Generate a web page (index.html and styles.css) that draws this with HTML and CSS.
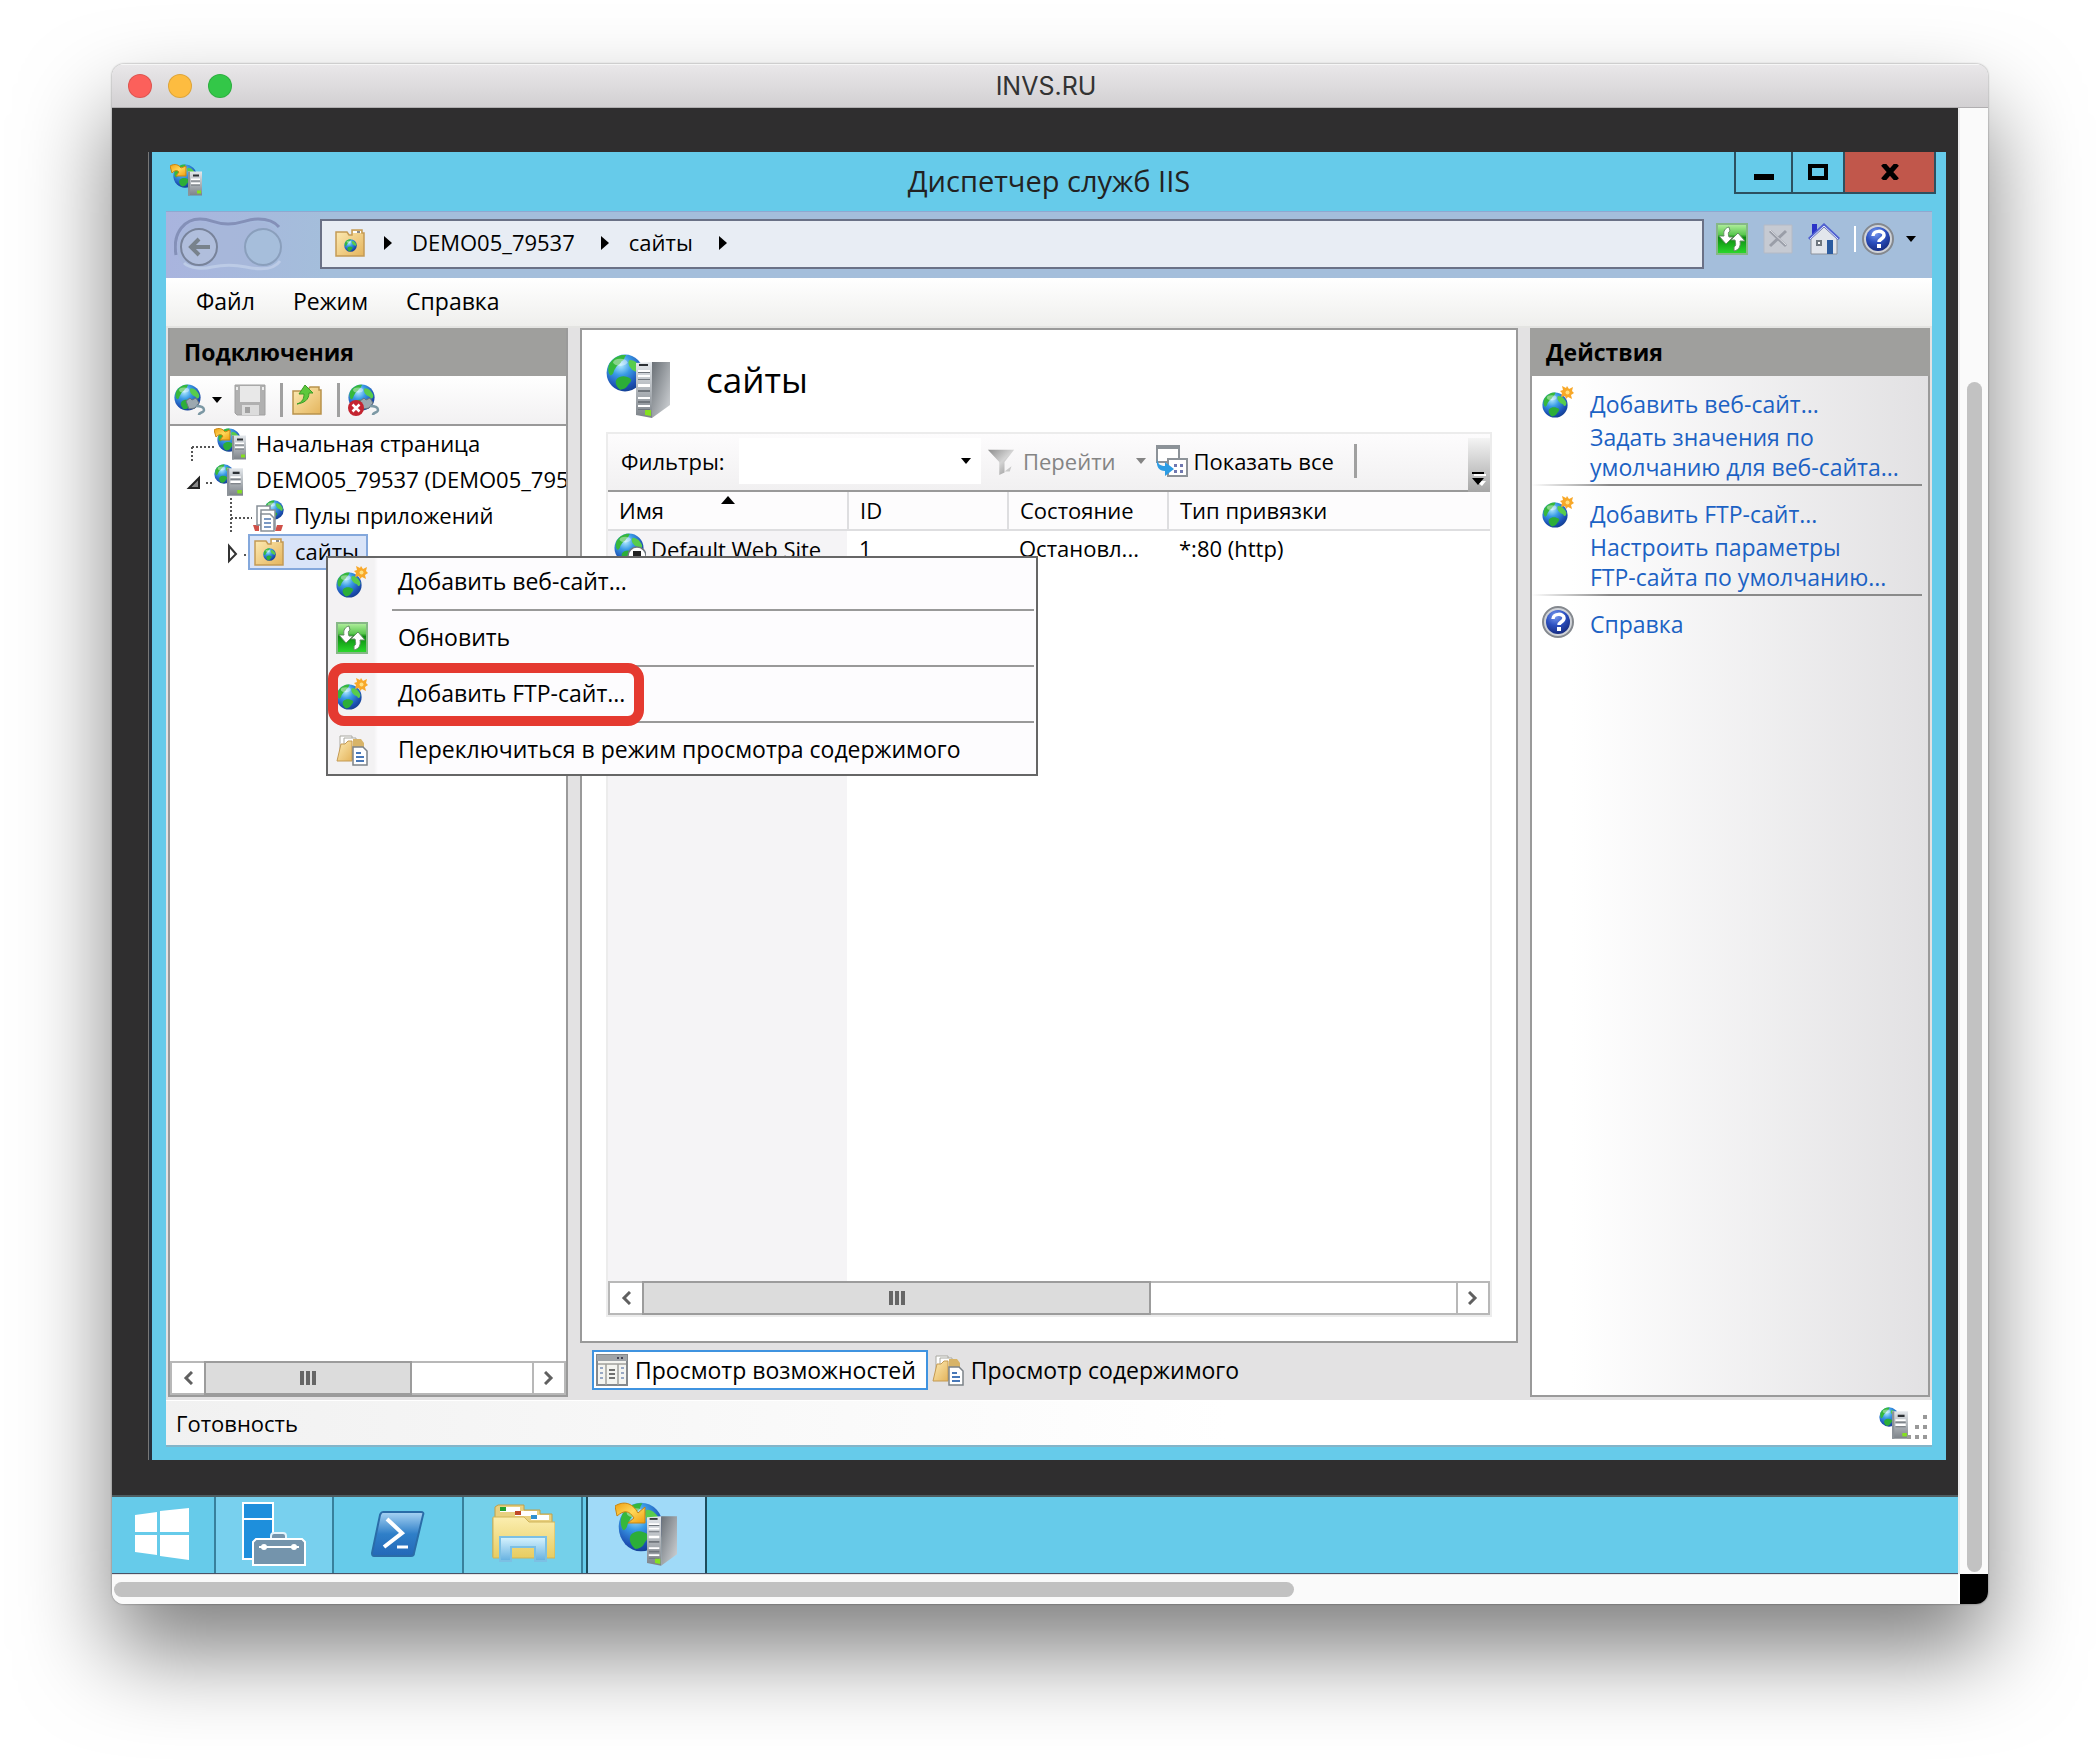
FILE: index.html
```html
<!DOCTYPE html>
<html lang="ru">
<head>
<meta charset="utf-8">
<title>INVS.RU</title>
<link rel="stylesheet" href="styles.css">
</head>
<body>
<svg class="sprite" aria-hidden="true">
  <defs>
    <radialGradient id="g-sea" cx=".38" cy=".28" r=".8"><stop offset="0" stop-color="#b4ecff"/><stop offset=".35" stop-color="#3a9be6"/><stop offset=".75" stop-color="#1c50b4"/><stop offset="1" stop-color="#123a86"/></radialGradient>
    <linearGradient id="g-server" x1="0" y1="0" x2="0" y2="1"><stop offset="0" stop-color="#e4e8ec"/><stop offset="1" stop-color="#7c8288"/></linearGradient>
    <linearGradient id="g-side" x1="0" y1="0" x2="1" y2="1"><stop offset="0" stop-color="#6a7076"/><stop offset="1" stop-color="#d4d7da"/></linearGradient>
    <linearGradient id="g-folder" x1="0" y1="0" x2="1" y2="1"><stop offset="0" stop-color="#fdebb4"/><stop offset="1" stop-color="#e4b45c"/></linearGradient>
    <linearGradient id="g-green" x1="0" y1="0" x2="0" y2="1"><stop offset="0" stop-color="#b4f0a0"/><stop offset=".35" stop-color="#5cc850"/><stop offset=".45" stop-color="#0c8a10"/><stop offset="1" stop-color="#2cdc2c"/></linearGradient>
    <radialGradient id="g-help" cx=".4" cy=".25" r=".8"><stop offset="0" stop-color="#7c9cf0"/><stop offset=".5" stop-color="#2c50c0"/><stop offset="1" stop-color="#14287c"/></radialGradient>
    <linearGradient id="g-arrow" x1="0" y1="0" x2="1" y2="1"><stop offset="0" stop-color="#f0a010"/><stop offset=".5" stop-color="#ffd858"/><stop offset="1" stop-color="#f09c10"/></linearGradient>
    <linearGradient id="g-ps" x1="0" y1="0" x2="0" y2="1"><stop offset="0" stop-color="#a8d4f4"/><stop offset=".5" stop-color="#2f7fc8"/><stop offset="1" stop-color="#2468b8"/></linearGradient>
    <linearGradient id="g-glass" x1="0" y1="0" x2="0" y2="1"><stop offset="0" stop-color="#d8f4ff"/><stop offset="1" stop-color="#64b0e0"/></linearGradient>
    <linearGradient id="g-yellow" x1="0" y1="0" x2="0" y2="1"><stop offset="0" stop-color="#fbeeb0"/><stop offset="1" stop-color="#e8cc60"/></linearGradient>
    <linearGradient id="g-grey" x1="0" y1="0" x2="1" y2="1"><stop offset="0" stop-color="#8c8c8c"/><stop offset=".5" stop-color="#d4d4d4"/><stop offset="1" stop-color="#8c8c8c"/></linearGradient>
  </defs>
  <symbol id="globe" viewBox="0 0 32 32">
    <circle cx="16" cy="16" r="15.500" fill="url(#g-sea)"/>
    <path d="M3 8C7 2 13 0 17 1c-2 2-1 4-4 5-1 3-4 3-5 6-2 2-1 5-4 6-2-1-3-6-1-10z" fill="#36b83c"/>
    <path d="M20 5c5 0 8 4 10 8 0 3-1 5-3 4-1-3-4-2-6-5-2-2-3-6-1-7z" fill="#58cc4c"/>
    <path d="M9 21c3-3 8-3 12 0 1 2-2 4-3 6-1 2-4 3-6 3-3-2-5-6-3-9z" fill="#2cae38"/>
    <ellipse cx="12" cy="7" rx="6" ry="3" fill="#fff" opacity=".4"/>
  </symbol>
  <symbol id="tower" viewBox="0 0 14 24">
    <path d="M0 0h14v24H0z" fill="url(#g-server)"/>
    <path d="M0 0h2v24H0z" fill="#8c9298"/>
    <path d="M5 3h6v2H5z" fill="#2c3034"/>
    <path d="M3 7h9v2H3zM3 11h9v2H3z" fill="#fff"/>
    <path d="M3 9h9v1H3zM3 13h9v1H3z" fill="#6c7278"/>
    <path d="M9 19h4v3H9z" fill="#84e020"/>
  </symbol>
  <symbol id="server" viewBox="0 0 32 32">
    <use href="#globe" x="0" y="0" width="20" height="20"/>
    <use href="#tower" x="13" y="4" width="16" height="28" />
  </symbol>
  <symbol id="iis" viewBox="0 0 32 32">
    <use href="#globe" x="3" y="0" width="24" height="24"/>
    <path d="M0 2c5-3 9-1 11 2l5-2v10H6l3-4C7 6 5 6 2 9z" fill="url(#g-arrow)" stroke="#c88410"/>
    <use href="#tower" x="18" y="7" width="14" height="25"/>
  </symbol>
  <symbol id="globe-new" viewBox="0 0 32 32">
    <use href="#globe" x="0" y="6" width="26" height="26"/>
    <path d="M25 0l2 3 4-2-1 4 2 2-3 2 1 4-4-2-2 2-1-3-4 1 1-4-2-2 3-1-1-4 4 2z" fill="#f8a828"/>
    <circle cx="25.500" cy="6.500" r="2" fill="#ffe080"/>
  </symbol>
  <symbol id="site-folder" viewBox="0 0 32 32">
    <path d="M2 5h11l2 3h3V3h10v3h2v23H2z" fill="url(#g-folder)" stroke="#c49a54" stroke-width="1.500"/>
    <path d="M19 4h8v2h-8z" fill="#fff"/><path d="M23 4h3v2h-3z" fill="#888"/>
    <use href="#globe" x="10" y="12" width="13" height="13"/>
  </symbol>
  <symbol id="refresh" viewBox="0 0 32 32">
    <path d="M1 1h30v30H1z" fill="url(#g-green)" stroke="#86b886" stroke-width="2"/>
    <path d="M13 4c-4 1-6 4-5 9H3l7 8 7-7h-4c-1-3-1-5 1-6z" fill="#fff" stroke="#648c64"/>
    <path d="M18 28c5-1 7-5 6-10h5l-7-8-7 7h4c1 4 1 6-1 7z" fill="#fff" stroke="#648c64"/>
  </symbol>
  <symbol id="stop" viewBox="0 0 32 32">
    <path d="M2 2h28v28H2z" fill="#c6cad2" stroke="#b4bac6"/>
    <path d="M8 8l16 15M24 8L8 23" stroke="#9a9ea8" stroke-width="3"/>
    <path d="M8 7l16 15" stroke="#dcdee4" stroke-width="1"/>
  </symbol>
  <symbol id="home" viewBox="0 0 32 32">
    <path d="M4 1h5v8l-5 5z" fill="#2a34c8"/>
    <path d="M3 16L16 4l13 12v15H3z" fill="#e2e6ec" stroke="#8c929c"/>
    <path d="M1 16L16 2l15 14" fill="none" stroke="#5060d0" stroke-width="3"/>
    <path d="M2 16L16 3l14 13" fill="none" stroke="#e4e8ff" stroke-width="1"/>
    <path d="M8 17h6v6H8z" fill="#707880"/><path d="M10 19h2v2h-2z" fill="#fff"/>
    <path d="M19 17h6v14h-6z" fill="#2c5ca0"/>
  </symbol>
  <symbol id="help" viewBox="0 0 32 32">
    <circle cx="16" cy="16" r="15" fill="#d0d3d8" stroke="#84888e" stroke-width="2"/>
    <circle cx="16" cy="16" r="12" fill="url(#g-help)"/>
    <path d="M11 13c0-6 11-6 11-1 0 4-5 4-5 7" fill="none" stroke="#fff" stroke-width="3.500"/>
    <path d="M15 21h4v4h-4z" fill="#fff"/>
  </symbol>
  <symbol id="connect" viewBox="0 0 32 32">
    <use href="#globe" x="0" y="0" width="27" height="27"/>
    <path d="M12 17l4-3 2 2 4-2 3 5-4 5-6 1z" fill="#9ca8b0" stroke="#68747c"/>
    <path d="M22 22c4 0 8 1 8 4s-5 2-5 5" fill="none" stroke="#7c98a4" stroke-width="2.500"/>
  </symbol>
  <symbol id="disconnect" viewBox="0 0 32 32">
    <use href="#connect" width="32" height="32"/>
    <circle cx="8" cy="24" r="8" fill="#c42430"/>
    <path d="M4.500 20.500l7 7M11.500 20.500l-7 7" stroke="#fff" stroke-width="2.500"/>
  </symbol>
  <symbol id="disk" viewBox="0 0 32 32">
    <path d="M1 1h30v30H3l-2-2z" fill="#b0b0b0" stroke="#a0a0a0"/>
    <path d="M6 2h20v16H6z" fill="#e8e8e8"/>
    <path d="M8 21h17v10H8z" fill="#dcdcdc"/><path d="M11 23h5v6h-5z" fill="#a0a0a0"/>
    <path d="M2 3h2v3H2zM28 3h2v3h-2z" fill="#eee"/>
  </symbol>
  <symbol id="folder-up" viewBox="0 0 32 32">
    <path d="M2 7h14l3-4h9v3h2v24H2z" fill="url(#g-folder)" stroke="#b8924c" stroke-width="1.500"/>
    <path d="M6 20c6-2 7-6 7-10H8l6-9 8 8h-4c0 7-5 10-12 11z" fill="#5cc83c" stroke="#3c9c28"/>
  </symbol>
  <symbol id="pool" viewBox="0 0 32 32">
    <use href="#globe" x="12" y="0" width="20" height="20"/>
    <path d="M1 25h6v6H3zM25 25h6l-2 6h-6z" fill="#d05048"/>
    <path d="M5 6h13v19H5z" fill="#fff" stroke="#889098" stroke-width="1.500"/>
    <path d="M9 10h14v19H9z" fill="#fff" stroke="#889098" stroke-width="1.500"/>
    <path d="M9 14h9l4 4v13H9z" fill="#fff" stroke="#889098" stroke-width="1.500"/>
    <path d="M12 19h7M12 23h7M12 27h7" stroke="#5078b0" stroke-width="1.500"/>
  </symbol>
  <symbol id="site" viewBox="0 0 32 32">
    <use href="#globe" width="30" height="30"/>
    <circle cx="23" cy="23" r="9" fill="#fff" stroke="#707880" stroke-width="1.500"/>
    <path d="M19 18h8v10h-8z" fill="#222"/>
  </symbol>
  <symbol id="funnel" viewBox="0 0 32 32">
    <path d="M1 3h30L20 17v12l-6 3V17z" fill="url(#g-grey)"/>
    <path d="M20 28l8-6-2 6z" fill="#c8c8c8"/>
  </symbol>
  <symbol id="show-all" viewBox="0 0 32 32">
    <path d="M1 1h22v16H1z" fill="#fff" stroke="#8c9298" stroke-width="2"/><path d="M0 0h24v4H0z" fill="#8c9298"/>
    <path d="M12 14h19v17H12z" fill="#fff" stroke="#8c9298" stroke-width="2"/>
    <path d="M18 19h3v3h-3zM24 19h3v3h-3zM18 25h3v3h-3zM24 25h3v3h-3z" fill="#7078b0"/>
    <path d="M1 14c1 5 3 7 8 7v-4l9 7-9 7v-5c-6 0-9-4-8-12z" fill="#2c9ce4"/>
  </symbol>
  <symbol id="features" viewBox="0 0 32 32">
    <path d="M1 1h30v30H1z" fill="#f4f4f0" stroke="#84888c" stroke-width="2"/>
    <path d="M1 1h30v6H1z" fill="#a0a4a8"/><path d="M21 3h2v2h-2zM25 3h2v2h-2z" fill="#445"/>
    <path d="M10 10v21M22 10v21M2 10h28" stroke="#a0a09c" stroke-width="1.500"/>
    <path d="M4 14h3M4 19h3M4 24h3M25 14h3M25 19h3M25 24h3" stroke="#98a8c4" stroke-width="2"/>
    <path d="M13 16h6M13 20h6M13 24h6" stroke="#444" stroke-width="1.500"/>
  </symbol>
  <symbol id="content" viewBox="0 0 32 32">
    <path d="M4 2h12v20H4z" fill="#fff" stroke="#a8a8a0"/><path d="M8 4h12v20H8z" fill="#fff" stroke="#a8a8a0"/>
    <path d="M17 5h8l3 4v17H16z" fill="#d8b468"/>
    <path d="M1 27L5 10h4l3-3h4v20z" fill="url(#g-folder)" stroke="#c49a54"/>
    <path d="M17 13h10l4 4v14H17z" fill="#fff" stroke="#7c8288" stroke-width="1.500"/>
    <path d="M20 19h5M20 23h8M20 27h8" stroke="#4878b8" stroke-width="2"/>
  </symbol>
  <symbol id="big-tower" viewBox="0 0 34 56">
    <path d="M0 1l16-1v56L0 53z" fill="url(#g-server)"/>
    <path d="M16 0h18v43L16 56z" fill="url(#g-side)"/>
    <path d="M3 2h9v2H3z" fill="#2c3034"/>
    <path d="M2 8h12v2H2zM2 13h12v2H2zM2 22h12v3H2zM2 35h12v2H2zM2 43h12v2H2z" fill="#fff"/>
    <path d="M2 10h12v1H2zM2 17h12v1H2zM2 28h12v2H2zM2 39h12v2H2zM2 47h12v1H2z" fill="#70767c"/>
    <path d="M9 48h6v6l-6-1z" fill="#84e020"/>
  </symbol>
  <symbol id="sites-large" viewBox="0 0 64 64">
    <use href="#globe" width="38" height="38"/>
    <use href="#big-tower" x="30" y="8" width="34" height="56"/>
  </symbol>
  <symbol id="globe-tall" viewBox="0 0 32 32" preserveAspectRatio="none"><use href="#globe" width="32" height="32"/></symbol>
  <symbol id="iis-large" viewBox="0 0 64 64">
    <use href="#globe-tall" x="3" y="0" width="46" height="50"/>
    <path d="M0 4C8-1 17 0 23 11l7-6v16H13l6-5C14 8 9 8 2 14z" fill="url(#g-arrow)" stroke="#c88410"/>
    <use href="#big-tower" x="32" y="14" width="30" height="50"/>
  </symbol>
  <symbol id="caret" viewBox="0 0 12 7"><path d="M0 0h12L6 7z" fill="currentColor"/></symbol>
  <symbol id="crumb" viewBox="0 0 8 14"><path d="M0 0l8 7-8 7z" fill="currentColor"/></symbol>
  <symbol id="chev-left" viewBox="0 0 10 14"><path d="M9 1L3 7l6 6" fill="none" stroke="#606060" stroke-width="3"/></symbol>
  <symbol id="chev-right" viewBox="0 0 10 14"><path d="M1 1l6 6-6 6" fill="none" stroke="#606060" stroke-width="3"/></symbol>
  <symbol id="windows" viewBox="0 0 54 52">
    <path d="M0 7l22-3v20H0zM25 3l29-3v24H25zM0 27h22v20L0 44zM25 27h29v25l-29-4z" fill="#fff"/>
  </symbol>
  <symbol id="server-manager" viewBox="0 0 64 64">
    <path d="M1 1h30v56H1z" fill="#1e8fdc" stroke="#fff" stroke-width="2"/><path d="M1 17h30" stroke="#fff" stroke-width="2"/>
    <path d="M29 37v-3c0-2 1-3 3-3h9c2 0 3 1 3 3v3" fill="#7494ac" stroke="#e4f4fc" stroke-width="2"/>
    <path d="M14 37h46l3 3v23H11V40z" fill="#7494ac" stroke="#fff" stroke-width="2"/>
    <path d="M17 45h40" stroke="#fff" stroke-width="2"/><circle cx="22" cy="45" r="3" fill="#fff"/><circle cx="52" cy="45" r="3" fill="#fff"/>
  </symbol>
  <symbol id="powershell" viewBox="0 0 54 46">
    <path d="M12 1h38c2 0 3 1 2 3l-9 38c0 2-1 3-3 3H3c-2 0-2-1-2-3L9 4c1-2 1-3 3-3z" fill="url(#g-ps)" stroke="#2a6ca8" stroke-width="2"/>
    <path d="M16 8l15 14-18 14" fill="none" stroke="#fff" stroke-width="4"/><path d="M26 36h11" stroke="#fff" stroke-width="3"/>
  </symbol>
  <symbol id="explorer" viewBox="0 0 64 60">
    <path d="M4 3l3-2h26v5h16v4h12v43H2V14h2z" fill="#e8d080" stroke="#c0a048"/>
    <path d="M9 3h20v5H9zM24 7h22v5H24zM40 11h18v5H40z" fill="#fff"/>
    <path d="M9 3h6v4H9z" fill="#20a030"/><path d="M24 7h6v4h-6z" fill="#c04828"/><path d="M40 11h6v4h-6z" fill="#3090d0"/>
    <path d="M2 13h31l5 5h26v36H2z" fill="url(#g-yellow)" stroke="#d0b458"/>
    <path d="M9 33h46v24H44V43H20v14H9z" fill="url(#g-glass)" stroke="#7cc0e4" stroke-width="2"/>
  </symbol>
</svg>

<main class="mac">
  <header class="mac-title">
    <div class="lights">
      <button class="light light-red" aria-label="Закрыть"></button>
      <button class="light light-yellow" aria-label="Свернуть"></button>
      <button class="light light-green" aria-label="Развернуть"></button>
    </div>
    <h1 class="mac-name">INVS.RU</h1>
  </header>
  <div class="mac-body">
    <div class="desktop">
      <section class="iis">
        <header class="iis-title">
          <svg class="icon iis-logo"><use href="#iis"/></svg>
          <h2 class="iis-name">Диспетчер служб IIS</h2>
          <div class="win-buttons">
            <button class="win-btn win-min" aria-label="Свернуть"><svg width="20" height="16"><path d="M0 10h20v6H0z"/></svg></button>
            <button class="win-btn win-max" aria-label="Развернуть"><svg width="20" height="16"><path d="M2 2h16v12H2z" fill="none" stroke="#000" stroke-width="4"/></svg></button>
            <button class="win-btn win-close" aria-label="Закрыть"><svg width="18" height="16"><path d="M2 0l14 16M16 0L2 16" stroke="#000" stroke-width="5"/></svg></button>
          </div>
        </header>

        <nav class="nav">
          <svg class="travel" viewBox="0 0 112 54">
            <path d="M2 38C-2 14 12 2 26 2c12 0 14 5 28 5s18-5 30-5c10 0 17 3 21 8" fill="none" stroke="#8490b8" stroke-width="3"/>
            <path d="M4 34C2 16 14 5 26 5c12 0 14 5 28 5s18-5 30-5c26 0 32 44 3 46-14 0-18-3-33-3s-19 3-31 3C10 51 4 44 4 34z" fill="#a6b6d8" opacity=".7"/>
            <path d="M10 46c6 6 20 6 28 4 10-2 24-2 34 0 14 3 28 3 34-6" fill="none" stroke="#bccbe6" stroke-width="3"/>
            <circle cx="25" cy="30" r="18" fill="#b0bedc" stroke="#78839a" stroke-width="2"/>
            <path d="M36 30H18M25 22l-8 8 8 8" fill="none" stroke="#78828c" stroke-width="4"/>
            <circle cx="89" cy="30" r="18" fill="#a6bedb" stroke="#8a9fbc" stroke-width="2"/>
          </svg>
          <div class="address">
            <svg class="icon"><use href="#site-folder"/></svg>
            <svg class="crumb"><use href="#crumb"/></svg>
            <a class="crumb-link" href="#server">DEMO05_79537</a>
            <svg class="crumb"><use href="#crumb"/></svg>
            <a class="crumb-link" href="#sites">сайты</a>
            <svg class="crumb"><use href="#crumb"/></svg>
          </div>
          <div class="nav-tools">
            <button class="tool" aria-label="Обновить"><svg class="icon"><use href="#refresh"/></svg></button>
            <button class="tool" aria-label="Остановить"><svg class="icon"><use href="#stop"/></svg></button>
            <button class="tool" aria-label="Домой"><svg class="icon"><use href="#home"/></svg></button>
            <span class="nav-sep"></span>
            <button class="tool tool-help" aria-label="Справка"><svg class="icon"><use href="#help"/></svg><svg class="caret"><use href="#caret"/></svg></button>
          </div>
        </nav>

        <div class="menubar">
          <button class="menu-btn">Файл</button>
          <button class="menu-btn">Режим</button>
          <button class="menu-btn">Справка</button>
        </div>

        <div class="work">
          <aside class="panel connections">
            <h3 class="panel-head">Подключения</h3>
            <div class="conn-tools">
              <button class="tool" aria-label="Подключиться"><svg class="icon"><use href="#connect"/></svg><svg class="caret"><use href="#caret"/></svg></button>
              <button class="tool tool-save" aria-label="Сохранить"><svg class="icon"><use href="#disk"/></svg></button>
              <span class="sep"></span>
              <button class="tool" aria-label="Вверх"><svg class="icon"><use href="#folder-up"/></svg></button>
              <span class="sep"></span>
              <button class="tool" aria-label="Отключиться"><svg class="icon"><use href="#disconnect"/></svg></button>
            </div>
            <ul class="tree">
              <li class="node"><svg class="twig" width="44" height="36"><path d="M22 21h22M22 21v15" class="dots"/></svg><svg class="icon"><use href="#iis"/></svg><span class="node-name">Начальная страница</span></li>
              <li class="node"><svg class="twig" width="44" height="36"><path d="M19 26h10V16z" fill="#888" stroke="#222" stroke-width="2"/><path d="M36 21h8" class="dots"/></svg><svg class="icon"><use href="#server"/></svg><span class="node-name">DEMO05_79537 (DEMO05_79537)</span></li>
              <li class="node"><svg class="twig" width="82" height="36"><path d="M61 0v36M61 20h21" class="dots"/></svg><svg class="icon"><use href="#pool"/></svg><span class="node-name">Пулы приложений</span></li>
              <li class="node"><svg class="twig" width="78" height="36"><path d="M59 12v15l7-7z" fill="#fff" stroke="#333" stroke-width="2"/><path d="M74 21h4" class="dots"/></svg><span class="node-selected"><svg class="icon"><use href="#site-folder"/></svg><span class="node-name">сайты</span></span></li>
            </ul>
            <div class="scroll">
              <button class="scroll-btn" aria-label="Влево"><svg width="10" height="14"><use href="#chev-left"/></svg></button>
              <span class="scroll-thumb conn-thumb"></span>
              <button class="scroll-btn" aria-label="Вправо"><svg width="10" height="14"><use href="#chev-right"/></svg></button>
            </div>
          </aside>

          <div class="center">
            <section class="feature">
              <div class="feature-head">
                <svg class="icon-xl"><use href="#sites-large"/></svg>
                <h3 class="feature-name">сайты</h3>
              </div>
              <div class="list">
                <div class="filters">
                  <label class="filter-label" for="filter">Фильтры:</label>
                  <span class="combo"><select id="filter" class="combo-box"><option></option></select><svg class="caret"><use href="#caret"/></svg></span>
                  <button class="tool tool-go" disabled><svg class="icon icon-funnel"><use href="#funnel"/></svg>Перейти<svg class="caret"><use href="#caret"/></svg></button>
                  <button class="tool tool-all"><svg class="icon"><use href="#show-all"/></svg>Показать все</button>
                  <span class="sep"></span>
                  <button class="overflow" aria-label="Параметры панели"><svg width="14" height="14"><path d="M2 2h12v2H2zM4 9l6 5 4-5z" fill="#fff"/><path d="M0 0h12v2H0zM0 6h12l-6 7z"/></svg></button>
                </div>
                <table class="sites">
                  <colgroup><col class="col-name"><col class="col-id"><col class="col-id"><col></colgroup>
                  <thead><tr><th class="sorted">Имя<svg class="sort-mark" viewBox="0 0 14 8"><path d="M0 8h14L7 0z"/></svg></th><th>ID</th><th>Состояние</th><th>Тип привязки</th></tr></thead>
                  <tbody><tr><td class="cell-name"><span class="site-name"><svg class="icon"><use href="#site"/></svg>Default Web Site</span></td><td>1</td><td>Остановл...</td><td>*:80 (http)</td></tr></tbody>
                </table>
                <div class="scroll list-scroll">
                  <button class="scroll-btn" aria-label="Влево"><svg width="10" height="14"><use href="#chev-left"/></svg></button>
                  <span class="scroll-thumb list-thumb"></span>
                  <button class="scroll-btn" aria-label="Вправо"><svg width="10" height="14"><use href="#chev-right"/></svg></button>
                </div>
              </div>
            </section>
            <div class="views">
              <button class="view view-on"><svg class="icon"><use href="#features"/></svg>Просмотр возможностей</button>
              <button class="view"><svg class="icon"><use href="#content"/></svg>Просмотр содержимого</button>
            </div>
          </div>

          <aside class="panel actions">
            <h3 class="panel-head">Действия</h3>
            <div class="action-group">
              <svg class="icon"><use href="#globe-new"/></svg>
              <a class="action" href="#add-web">Добавить веб-сайт...</a>
              <a class="action action-sub" href="#web-defaults">Задать значения по умолчанию для веб-сайта...</a>
            </div>
            <div class="action-group">
              <svg class="icon"><use href="#globe-new"/></svg>
              <a class="action" href="#add-ftp">Добавить FTP-сайт...</a>
              <a class="action action-sub" href="#ftp-defaults">Настроить параметры <span class="nobreak">FTP-сайта</span> по умолчанию...</a>
            </div>
            <div class="action-group">
              <svg class="icon"><use href="#help"/></svg>
              <a class="action" href="#help-page">Справка</a>
            </div>
          </aside>

          <div class="context" role="menu">
            <button class="context-item" role="menuitem"><svg class="icon"><use href="#globe-new"/></svg><span class="context-text">Добавить веб-сайт...</span></button>
            <button class="context-item" role="menuitem"><svg class="icon"><use href="#refresh"/></svg><span class="context-text">Обновить</span></button>
            <button class="context-item context-marked" role="menuitem"><svg class="icon"><use href="#globe-new"/></svg><span class="context-text">Добавить FTP-сайт...</span></button>
            <button class="context-item" role="menuitem"><svg class="icon"><use href="#content"/></svg><span class="context-text">Переключиться в режим просмотра содержимого</span></button>
          </div>
        </div>

        <footer class="status">
          <span>Готовность</span>
          <svg class="icon status-icon"><use href="#server"/></svg>
          <svg class="grip" width="20" height="24"><path d="M16 0h4v4h-4zM8 10h4v4H8zM16 10h4v4h-4zM0 20h4v4H0zM8 20h4v4H8zM16 20h4v4h-4z" fill="#999"/></svg>
        </footer>
      </section>

      <div class="taskbar">
        <button class="task task-start" aria-label="Пуск"><svg width="54" height="52"><use href="#windows"/></svg></button>
        <button class="task task-manager" aria-label="Диспетчер серверов"><svg width="64" height="64"><use href="#server-manager"/></svg></button>
        <button class="task task-shell" aria-label="PowerShell"><svg width="54" height="46"><use href="#powershell"/></svg></button>
        <button class="task task-files" aria-label="Проводник"><svg width="64" height="60"><use href="#explorer"/></svg></button>
        <button class="task task-active" aria-label="Диспетчер служб IIS"><svg width="64" height="64"><use href="#iis-large"/></svg></button>
      </div>
    </div>
    <div class="track-y"><span class="bar-y"></span></div>
    <div class="track-x"><span class="bar-x"></span></div>
    <div class="corner"></div>
  </div>
</main>
</body>
</html>
```
FILE: styles.css
```css
*, *::before, *::after { box-sizing: border-box; }

body {
  margin: 0;
  min-height: 100vh;
  padding: 64px 112px 160px;
  display: flex;
  background: #fff;
  color: #000;
  font: 22px/30px "Open Sans", "Noto Sans", sans-serif;
}

h1, h2, h3, ul { margin: 0; padding: 0; font: inherit; }
button, select { margin: 0; padding: 0; border: 0; background: none; color: inherit; font: inherit; }
a { text-decoration: none; color: inherit; }
svg { display: block; flex: none; }

.sprite { position: absolute; width: 0; height: 0; }
.icon { width: 32px; height: 32px; }
.icon-xl { width: 64px; height: 64px; }
.caret { width: 10px; height: 6px; }
.nobreak { white-space: nowrap; }

/* outer desktop window */
.mac {
  flex: 1;
  min-width: 0;
  display: flex;
  flex-direction: column;
  border-radius: 12px;
  overflow: hidden;
  box-shadow: 0 0 2px rgba(0, 0, 0, .5), 0 48px 90px rgba(0, 0, 0, .5);
}
.mac-title {
  display: grid;
  grid-template-columns: 1fr auto 1fr;
  align-items: center;
  height: 44px;
  padding: 0 24px 0 16px;
  border-top: 1px solid #f6f6f6;
  border-bottom: 1px solid #b0aeb0;
  background: linear-gradient(#e9e7e9, #d2d0d2);
}
.mac-name { font: 25px/36px Inter, "Liberation Sans", sans-serif; color: #333; }
.lights { display: flex; gap: 16px; }
.light { width: 24px; height: 24px; border-radius: 50%; border: 1px solid rgba(0, 0, 0, .12); }
.light-red { background: #fc605b; }
.light-yellow { background: #fdbc40; }
.light-green { background: #33c748; }

.mac-body { flex: 1; display: grid; grid-template: minmax(0, 1fr) 30px / minmax(0, 1fr) 30px; }
.desktop { display: flex; flex-direction: column; background: #2f2e2f; }
.track-y { padding: 274px 6px 2px 7px; background: #fafafa; border-left: 2px solid #ededed; display: flex; }
.bar-y { flex: 1; border-radius: 9px; background: #c2c2c2; }
.track-x { padding: 7px 0 7px 2px; background: #fafafa; border-top: 1px solid #e4e4e4; display: flex; }
.bar-x { width: 64%; border-radius: 8px; background: #c1c1c1; }
.corner { margin-left: 2px; background: #000; }

/* IIS manager window */
.iis {
  flex: 1;
  display: flex;
  flex-direction: column;
  margin: 44px 12px 35px 40px;
  padding: 0 14px 13px;
  background: #66cbea;
  box-shadow: -3px 0 0 #26303c, -4px 0 0 #777;
}
.iis-title { display: grid; grid-template-columns: 1fr auto 1fr; height: 59px; }
.iis-logo { margin: 12px 4px; }
.iis-name { font-size: 29px; line-height: 57px; color: #222; }
.win-buttons { justify-self: end; display: flex; height: 42px; width: 202px; margin-right: -4px; border: 2px solid #2c5060; border-top: 0; }
.win-btn { display: flex; align-items: center; justify-content: center; border-left: 2px solid #2c5060; }
.win-min { width: 55px; border-left: 0; }
.win-max { width: 52px; }
.win-close { flex: 1; background: #c1574b; }

.nav {
  display: flex;
  align-items: center;
  gap: 12px;
  height: 67px;
  padding: 0 16px 3px 8px;
  border-top: 1px solid #8fa8d0;
  background: linear-gradient(90deg, #a9b4de, #a4bedb 160px);
}
.travel { width: 112px; height: 54px; }
.address {
  flex: 1;
  display: flex;
  align-items: center;
  gap: 18px;
  height: 50px;
  margin-left: 22px;
  padding: 0 0 2px 12px;
  border: 2px solid #6a7186;
  background: #e8edf4;
}
.crumb-link { margin: 0 8px 2px 2px; }
.crumb { width: 8px; height: 14px; }
.nav-tools { display: flex; align-items: center; gap: 14px; margin-bottom: 10px; }
.nav-sep { width: 2px; height: 26px; background: #fff; }
.tool { display: flex; align-items: center; gap: 6px; }
.tool-help { gap: 12px; margin-left: -8px; }

.menubar {
  display: flex;
  gap: 38px;
  height: 50px;
  padding: 0 30px 2px;
  align-items: center;
  font-size: 23px;
  background: linear-gradient(#fff, #efefed);
  border-bottom: 2px solid #e4e4e2;
}

.work { position: relative; flex: 1; display: flex; gap: 12px; padding: 0 2px 3px; background: #e3e2e3; }
.panel { width: 400px; flex: none; display: flex; flex-direction: column; border: 2px solid #9a9a9a; border-top: 0; }
.panel-head { height: 48px; margin: 0 -2px; padding-left: 16px; background: #9f9f9d; font-weight: 700; font-size: 23px; line-height: 49px; }
.connections { background: #fff; overflow: hidden; }
.conn-tools { display: flex; align-items: center; height: 50px; padding: 0 4px; border-bottom: 2px solid #999; background: linear-gradient(#fff, #f2f1f2); }
.tool-save { margin: 0 12px; }
.sep { width: 3px; height: 34px; background: #a0a0a0; }
.conn-tools .sep { margin: 0 8px 0 2px; }
.conn-tools .sep:not(:nth-child(3)) { margin-left: 14px; }

.tree { flex: 1; list-style: none; }
.node { display: flex; align-items: center; height: 36px; white-space: nowrap; }
.node-name { margin: 0 0 2px 10px; }
.node-selected { display: flex; align-items: center; width: 120px; height: 36px; padding-left: 3px; border: 2px solid #84a8dc; background: #d9e4f8; }
.dots { fill: none; stroke: #555; stroke-width: 2; stroke-dasharray: 2 2; }

.scroll { display: flex; height: 34px; border: 2px solid #b8b8b8; background: #fff; }
.scroll-btn { width: 32px; display: flex; align-items: center; justify-content: center; }
.scroll-btn:last-child { margin-left: auto; border-left: 2px solid #b8b8b8; }
.scroll-thumb {
  margin: -2px 0;
  border: 2px solid #9c9c9c;
  background: linear-gradient(90deg, #666 4px, transparent 4px 6px, #666 6px 10px, transparent 10px 12px, #666 12px) center / 16px 14px no-repeat #dcdcdc;
}
.conn-thumb { width: 53%; }
.list-thumb { width: 58%; }

.center { flex: 1; min-width: 0; display: flex; flex-direction: column; }
.feature { flex: 1; display: flex; flex-direction: column; padding: 24px 24px 24px; border: 2px solid #9a9a9a; background: #fff; }
.feature-head { display: flex; align-items: center; gap: 36px; height: 78px; padding-bottom: 14px; }
.feature-name { padding-bottom: 12px; font-size: 35px; line-height: 44px; }
.list {
  flex: 1;
  display: flex;
  flex-direction: column;
  border: 2px solid #ececec;
  background: linear-gradient(90deg, #f5f4f6 239px, #fff 239px);
}
.filters { display: flex; align-items: center; height: 58px; padding: 0 0 2px 13px; border-bottom: 2px solid #999; background: linear-gradient(#fdfcfd, #f1f0f1); }
.filter-label { width: 118px; }
.combo { display: flex; align-items: center; width: 242px; height: 46px; padding-right: 10px; background: #fff; }
.combo-box { flex: 1; height: 46px; appearance: none; outline: 0; }
.tool-go { margin: 0 10px 0 6px; color: #848484; }
.tool-go .caret { margin-left: 14px; }
.icon-funnel { width: 28px; height: 28px; margin-right: 2px; }
.filters .sep { margin-left: 20px; }
.overflow { align-self: stretch; width: 22px; margin: 4px 0 -4px auto; padding-bottom: 6px; display: flex; align-items: flex-end; justify-content: center; background: linear-gradient(#f4f4f4, #a6a6a6); }

.sites { width: 100%; table-layout: fixed; border-collapse: collapse; }
.col-name { width: 240px; }
.col-id { width: 160px; }
.sites th { position: relative; height: 38px; padding: 0 12px 2px 11px; border-right: 2px solid #dedee0; border-bottom: 2px solid #dedee0; background: #fdfcfd; font-weight: 400; text-align: left; }
.sites th:last-child { border-right: 0; }
.sites td { height: 36px; padding: 0 12px 2px 11px; white-space: nowrap; }
.sites .cell-name { padding: 0 0 0 6px; }
.sort-mark { position: absolute; top: 4px; left: 50%; width: 14px; height: 8px; margin-left: -7px; }
.site-name { display: flex; align-items: center; gap: 5px; height: 34px; }
.list-scroll { margin-top: auto; }

.views { display: flex; align-items: center; height: 54px; padding-left: 12px; font-size: 23px; }
.view { display: flex; align-items: center; gap: 7px; height: 40px; padding: 0 10px 0 4px; }
.view-on { padding-left: 2px; border: 2px solid #3f93e0; background: #fff; }

.actions { background: linear-gradient(90deg, #fff 10%, #e2e1e3); }
.action-group {
  display: grid;
  grid-template-columns: 32px 1fr;
  column-gap: 16px;
  margin-right: 6px;
  padding: 10px 0 2px 10px;
  border-bottom: 2px solid;
  border-image: linear-gradient(90deg, transparent, #8a8a8a 20%) 1;
}
.action-group:last-child { border-bottom: 0; }
.action { color: #1c62c4; font-size: 23px; line-height: 36px; }
.action-sub { grid-column: 2; line-height: 30px; }

/* shortcut menu opened over the tree */
.context {
  position: absolute;
  left: 160px;
  top: 228px;
  width: 712px;
  display: flex;
  flex-direction: column;
  gap: 8px;
  padding-right: 2px;
  border: 2px solid #666;
  background: linear-gradient(90deg, #f3f2f3 46px, #fdfcfe 50px);
  font-size: 23px;
}
.context-item { position: relative; display: flex; align-items: center; height: 48px; padding-left: 8px; text-align: left; }
.context-text { flex: 1; padding: 0 0 2px 30px; }
.context-item + .context-item::before { content: ""; position: absolute; left: 64px; right: 0; top: -5px; height: 2px; background: #999; }
.context-marked { z-index: 1; }
.context-marked::after { content: ""; position: absolute; left: 0; top: -7px; width: 316px; height: 63px; border: 10px solid #e53a30; border-radius: 16px; }

.status { display: flex; align-items: center; height: 47px; padding: 0 5px 0 10px; border-top: 1px solid #fff; background: linear-gradient(90deg, #f1f1f1, #fff 60%); border-bottom: 2px solid #84b4c8; }
.status-icon { margin-left: auto; }
.grip { margin: 8px 0 0 -4px; }

/* taskbar */
.taskbar { display: flex; height: 79px; padding-left: 2px; border-top: 2px solid #4e5c60; border-bottom: 1px solid #4a5266; background: #66cbea; }
.task { display: flex; align-items: center; justify-content: center; padding-bottom: 2px; border-right: 2px solid #38809c; }
.task-start { width: 102px; padding-right: 4px; }
.task-manager { width: 118px; background: #78d0ee; }
.task-shell { width: 130px; }
.task-files { width: 119px; background: #74d0ea; }
.task-active { width: 121px; margin-left: 3px; border-left: 2px solid #1c4c5c; border-right-color: #1c4c5c; background: #a0daf8; }
```
